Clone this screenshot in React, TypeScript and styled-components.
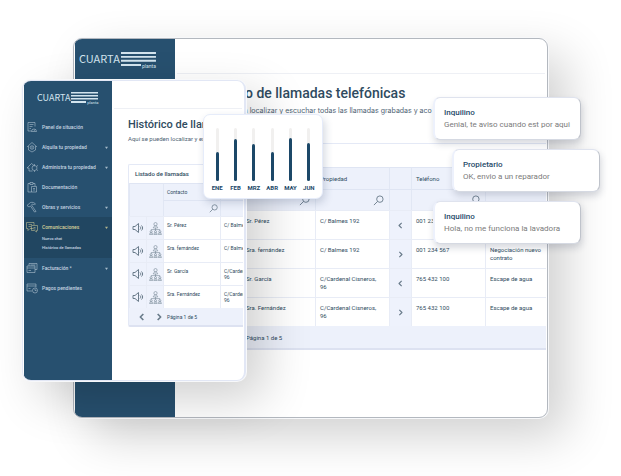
import React from 'react';
import styled, { createGlobalStyle, ThemeProvider } from 'styled-components';

const GlobalStyle = createGlobalStyle`
  *, *::before, *::after { box-sizing: border-box; }
  body { margin: 0; background: #fff; font-family: Roboto, "Open Sans", sans-serif; color: #2f4b60; }
  button { font: inherit; color: inherit; background: none; border: 0; padding: 0; }
  svg { display: block; }
`;

const large = {
  side: 100, bar: 35, logoTop: 13, logoLeft: 4, logoHeight: 40, logoText: 11, lines: 35, planta: 5,
  inset: 21, title: 14, titleTop: 9, subtitle: 7, titleGap: 6, boxTop: 28, caption: 24, captionText: 7,
  head: 22, filter: 21, row: 29, foot: 22, text: 6, headText: 6, line: 8, padY: 6, padX: 5,
  icon: 22, person: 74, place: 74, lens: 11, lensRight: 5, spill: 0, bottom: 67,
};

const compact: typeof large = {
  side: 88, bar: 28, logoTop: 11, logoLeft: 13, logoHeight: 24, logoText: 9, lines: 27, planta: 4,
  inset: 16, title: 11, titleTop: 7, subtitle: 6, titleGap: 4, boxTop: 21, caption: 19, captionText: 6,
  head: 17, filter: 16, row: 23, foot: 17, text: 5, headText: 5, line: 6, padY: 5, padX: 4,
  icon: 17, person: 57, place: 57, lens: 9, lensRight: 2, spill: 34, bottom: 53,
};

declare module 'styled-components' {
  export interface DefaultTheme extends Record<string, number> {}
}

const Stage = styled.main`
  position: relative;
  min-height: 476px;
  padding: 38px 73px 58px;
  overflow: hidden;
`;

const Window = styled.section`
  display: flex;
  overflow: hidden;
  border: 1px solid #b3b8bf;
  border-radius: 9px;
  background: #fff;
  box-shadow: inset 0 0 0 1px #fff, 0 0 0 1px #f7f8fa, 18px 18px 48px rgba(0, 0, 0, 0.19);
`;

const FrontWindow = styled(Window)`
  position: absolute;
  top: 80px;
  left: 22px;
  width: 36%;
  min-width: 224px;
  border-color: #e2e7f5;
  border-right-width: 2px;
`;

const Sidebar = styled.aside`
  flex: none;
  width: ${({ theme }) => theme.side}px;
  margin-left: 1px;
  background: #27506f;
  color: #c6d5e1;
`;

const Brand = styled.a`
  display: flex;
  align-items: flex-start;
  gap: 1px;
  height: ${({ theme }) => theme.logoHeight}px;
  padding: ${({ theme }) => theme.logoTop}px 0 0 ${({ theme }) => theme.logoLeft}px;
  color: #d3e4ee;
  text-decoration: none;
`;

const BrandName = styled.span`
  font-family: "Noto Sans CJK SC", sans-serif;
  font-size: ${({ theme }) => theme.logoText}px;
  line-height: ${({ theme }) => theme.logoText + 2}px;
`;

const BrandMark = styled.span`
  display: block;
  width: ${({ theme }) => theme.lines}px;
`;

const BrandFoot = styled.span`
  display: grid;
  grid-template-columns: 1fr auto;
  align-items: start;
  gap: 1px;
  font-size: ${({ theme }) => theme.planta}px;
  line-height: 4px;

  &::before {
    content: "";
    height: 2px;
    background: currentColor;
  }
`;

const Nav = styled.nav`
  padding-top: 12px;
  font-size: 5px;
  font-weight: 500;
`;

const NavGroup = styled.div<{ $active?: boolean }>`
  padding: ${({ $active }) => ($active ? '3px 0 6px' : '0')};
  background: ${({ $active }) => ($active ? '#214661' : 'transparent')};
`;

const NavItem = styled.button<{ $active?: boolean }>`
  display: grid;
  grid-template-columns: 13px 1fr 4px;
  align-items: center;
  gap: 3px;
  width: 100%;
  height: ${({ $active }) => ($active ? 14 : 20)}px;
  padding: 0 3px 0 2px;
  text-align: left;
  color: ${({ $active }) => ($active ? '#d8d19a' : 'inherit')};
`;

const SubItem = styled.a`
  display: block;
  padding-left: 18px;
  font-size: 4px;
  line-height: 9px;
  color: inherit;
  text-decoration: none;
`;

const Content = styled.div`
  flex: 1;
  min-width: 0;
  padding-bottom: ${({ theme }) => theme.bottom}px;
  overflow: hidden;
`;

const TopBar = styled.header`
  height: ${({ theme }) => theme.bar}px;
  margin: 0 2px;
  border-bottom: 1px solid #eef0f5;
`;

const Heading = styled.h1`
  margin: 0;
  padding: ${({ theme }) => theme.titleTop}px 0 0 ${({ theme }) => theme.inset}px;
  font-size: ${({ theme }) => theme.title}px;
  line-height: ${({ theme }) => theme.title + 6}px;
  font-weight: 500;
  white-space: nowrap;
`;

const Intro = styled.p<{ $wide?: boolean }>`
  margin: 0;
  padding: ${({ theme }) => theme.titleGap - 3}px 0 0 ${({ theme }) => theme.inset}px;
  font-family: ${({ $wide }) => ($wide ? 'Inter, sans-serif' : 'inherit')};
  font-size: ${({ theme }) => theme.subtitle}px;
  line-height: 9px;
  white-space: nowrap;
  color: #4d6273;
`;

const Listing = styled.div`
  margin: ${({ theme }) => theme.boxTop}px 1px 0 ${({ theme }) => theme.inset}px;
  overflow: hidden;
  border: 1px solid #e4e9f6;
  border-width: 1px 0 2px 1px;
  border-bottom-color: #dde2f1;
  border-radius: 2px 0 0 2px;
`;

const Table = styled.table`
  width: calc(100% + ${({ theme }) => theme.spill}px);
  table-layout: fixed;
  border-collapse: separate;
  border-spacing: 0;
  font-size: ${({ theme }) => theme.text}px;
  line-height: ${({ theme }) => theme.line}px;

  caption {
    height: ${({ theme }) => theme.caption - 1}px;
    padding-left: 6px;
    font-size: ${({ theme }) => theme.captionText}px;
    line-height: ${({ theme }) => theme.caption - 1}px;
    font-weight: 500;
    text-align: left;
  }
`;

const Col = styled.col<{ $kind?: 'icon' | 'person' | 'place' }>`
  width: ${({ theme, $kind }) => ($kind ? `${theme[$kind]}px` : 'auto')};
`;

const HeadCell = styled.th<{ $filter?: boolean }>`
  height: ${({ theme, $filter }) => ($filter ? theme.filter : theme.head)}px;
  padding: 0 ${({ theme, $filter }) => ($filter ? theme.lensRight : 0)}px 0 ${({ theme }) => theme.padX - 1}px;
  border-top: 1px solid #dfe5f3;
  border-left: 1px solid #e1e7f4;
  background: #edf1fb;
  font-size: ${({ theme }) => theme.headText}px;
  font-weight: 400;
  text-align: left;
`;

const Cell = styled.td`
  height: ${({ theme }) => theme.row}px;
  padding: ${({ theme }) => theme.padY}px 0 0 ${({ theme }) => theme.padX - 1}px;
  border-top: 1px solid #e8ecf6;
  border-left: 1px solid #e8ecf6;
  vertical-align: top;
  white-space: pre-line;
`;

const IconCell = styled(Cell)`
  padding: 0;
  background: #eef2fc;
  vertical-align: middle;
`;

const IconButton = styled.button`
  display: flex;
  margin: 0 auto;
  color: #6a7c8b;
`;

const Search = styled(IconButton)`
  margin: 0 0 0 auto;
`;

const Pager = styled.footer`
  display: grid;
  grid-template-columns: ${({ theme }) => `${theme.icon}px ${theme.icon}px 1fr`};
  align-items: center;
  height: ${({ theme }) => theme.foot}px;
  padding-left: ${({ theme }) => theme.padX}px;
  background: #edf1fb;
  font-size: ${({ theme }) => theme.headText}px;
`;

const ChartCard = styled.figure`
  position: absolute;
  top: 114px;
  left: 203px;
  display: grid;
  grid-template-columns: repeat(6, 1fr);
  width: 120px;
  margin: 0;
  padding: 13px 4px 6px;
  border: 1px solid #e6ecfa;
  border-radius: 7px;
  background: #fff;
  box-shadow: 2px 4px 8px rgba(40, 60, 100, 0.2);
`;

const Month = styled.div`
  display: flex;
  flex-direction: column;
  align-items: center;
  gap: 3px;
  font-size: 6px;
  line-height: 8px;
  font-weight: 700;
  color: #1c4868;
`;

const Track = styled.div`
  display: flex;
  align-items: flex-end;
  width: 3px;
  height: 53px;
  border-radius: 2px;
  background: #f1f0ef;
`;

const Fill = styled.div`
  width: 100%;
  border-radius: 2px;
  background: #1c4868;
`;

const Messages = styled.ul`
  position: absolute;
  top: 97px;
  right: 21px;
  display: flex;
  flex-direction: column;
  gap: 9px;
  width: 167px;
  margin: 0;
  padding: 0;
  list-style: none;
`;

const Message = styled.li<{ $own?: boolean }>`
  width: 148px;
  height: 43px;
  align-self: ${({ $own }) => ($own ? 'flex-end' : 'flex-start')};
  padding: 9px 0 0 9px;
  border: 1px solid #bfc3cb;
  border-top-color: #dfe3ee;
  border-left: 2px solid #edf1fc;
  border-bottom-color: #d5d9e2;
  border-radius: 7px;
  background: #fff;
  box-shadow: 1px 4px 7px rgba(40, 50, 80, 0.18);
  font-size: 8px;
  line-height: 12px;
  white-space: nowrap;
  color: #7b7b7b;
`;

const Sender = styled.strong`
  display: block;
  font-weight: 500;
  color: #1f4a69;
`;

const iconPaths: Record<string, React.ReactNode> = {
  panel: <><path d="M18 11V3H4v17h7M7 7h8M7 11h6M7 15h3" /><path d="M11 21a5 5 0 0 1 10 0zM16 20l2-3" /></>,
  rent: <><path d="m2 12 10-9 10 9M5 10v8l7 4 7-4v-8" /><circle cx="12" cy="13" r="3.5" /><path d="M12 11v4" /></>,
  manage: <><path d="M9 20H6v-6H2l9-9 6 5M9 20h4" /><circle cx="17" cy="14" r="5" /><path d="M17 6v3M17 19v3M22 10l2-1M22 18l2 1" /></>,
  docs: <><path d="M8 5H4v17h7M14 5h4v5M8 3h6v4H8z" /><path d="M11 11h10v11H11zM14 15h4M14 18h4" /></>,
  works: <path d="m2 9 7-6c4-1 7 0 10 3l-4 1-2-1-2 2 9 13-3 1-8-12-3 2z" />,
  chat: <><path d="M15 15H8l-4 4v-4H1V3h15v5M5 7h7M5 11h5" /><path d="M11 9h12v10h-2v3l-4-3h-6zM15 13h4M15 16h4" /></>,
  bill: <><path d="M6 8V3h16v12h-4M9 6h10" /><path d="M2 8h16v13H2zM2 12h16M5 17h5" /></>,
  pay: <><path d="M12 18H2V4h18v7M2 8h18M5 13h4" /><circle cx="18" cy="17" r="5" /><path d="M18 14v3h3" /></>,
  sound: <path d="M2 9h4l7-6v18l-7-6H2zM16 9c2 2 2 4 0 6M19 7c3 3 3 7 0 10" />,
  tree: <><circle cx="12" cy="4" r="3" /><path d="M8 11c0-5 8-5 8 0zM12 11v3M4 16v-2h16v2M12 14v2" /><circle cx="4" cy="18" r="2" /><circle cx="12" cy="18" r="2" /><circle cx="20" cy="18" r="2" /><path d="M1 23c0-4 6-4 6 0zM9 23c0-4 6-4 6 0zM17 23c0-4 6-4 6 0z" /></>,
  search: <><circle cx="15" cy="9" r="7" /><path d="m10 14-8 8" /></>,
  left: <path d="m16 3-9 9 9 9" />,
  right: <path d="m8 3 9 9-9 9" />,
};

function Icon({ name, size, weight = 2 }: { name: string; size: number; weight?: number }) {
  return (
    <svg width={size} height={size} viewBox="0 0 24 24" fill="none" stroke="currentColor" strokeWidth={weight} strokeLinejoin="round" aria-hidden="true">
      {iconPaths[name]}
    </svg>
  );
}

function Caret() {
  return <svg width="3" height="3" viewBox="0 0 4 4" aria-hidden="true"><path d="M0 1h4L2 4z" fill="currentColor" opacity="0.8" /></svg>;
}

function Logo() {
  return (
    <Brand href="#inicio">
      <BrandName>CUARTA</BrandName>
      <BrandMark>
        <svg viewBox="0 0 36 12" fill="currentColor" aria-hidden="true">
          <path d="M0 0h36v2H0zM0 4h36v2H0zM0 8h36v2H0z" />
        </svg>
        <BrandFoot>planta</BrandFoot>
      </BrandMark>
    </Brand>
  );
}

function PageIntro({ wide }: { wide?: boolean }) {
  return (
    <>
      <TopBar />
      <Heading>Histórico de llamadas telefónicas</Heading>
      <Intro $wide={wide}>Aquí se pueden localizar y escuchar todas las llamadas grabadas y aco</Intro>
    </>
  );
}

const calls = [
  { who: 'Sr. Pérez', where: 'C/ Balmes 192', way: 'left', phone: '001 234 567', about: '' },
  { who: 'Sra. fernández', where: 'C/ Balmes 192', way: 'right', phone: '001 234 567', about: 'Negociación nuevo\ncontrato' },
  { who: 'Sr. García', where: 'C/Cardenal Cisneros,\n96', way: 'left', phone: '765 432 100', about: 'Escape de agua' },
  { who: 'Sra. Fernández', where: 'C/Cardenal Cisneros,\n96', way: 'right', phone: '765 432 100', about: 'Escape de agua' },
];

function Calls({ full }: { full?: boolean }) {
  const m = full ? large : compact;
  const lens = <Search aria-label="Buscar"><Icon name="search" size={m.lens} /></Search>;
  return (
    <Listing>
      <Table>
        <caption>Listado de llamadas</caption>
        <colgroup>
          <Col $kind="icon" /><Col $kind="icon" /><Col $kind="person" />
          {full ? <><Col $kind="place" /><Col $kind="icon" /><Col $kind="place" /><Col /></> : <Col />}
        </colgroup>
        <thead>
          <tr>
            <HeadCell colSpan={2} rowSpan={2} />
            <HeadCell>Contacto</HeadCell>
            {full ? <><HeadCell>Propiedad</HeadCell><HeadCell /><HeadCell>Teléfono</HeadCell><HeadCell /></> : <HeadCell />}
          </tr>
          <tr>
            <HeadCell $filter>{lens}</HeadCell>
            {full ? <><HeadCell $filter>{lens}</HeadCell><HeadCell $filter /><HeadCell $filter>{lens}</HeadCell><HeadCell $filter /></> : <HeadCell $filter />}
          </tr>
        </thead>
        <tbody>
          {calls.map((call) => (
            <tr key={call.who}>
              <IconCell><IconButton aria-label="Escuchar"><Icon name="sound" size={12} /></IconButton></IconCell>
              <IconCell><IconButton aria-label="Derivar"><Icon name="tree" size={13} weight={1} /></IconButton></IconCell>
              <Cell>{call.who}</Cell>
              <Cell>{call.where}</Cell>
              {full && (
                <>
                  <IconCell><IconButton aria-label="Sentido"><Icon name={call.way} size={7} weight={4} /></IconButton></IconCell>
                  <Cell>{call.phone}</Cell>
                  <Cell>{call.about}</Cell>
                </>
              )}
            </tr>
          ))}
        </tbody>
      </Table>
      <Pager>
        <IconButton aria-label="Anterior"><Icon name="left" size={8} weight={5} /></IconButton>
        <IconButton aria-label="Siguiente"><Icon name="right" size={8} weight={5} /></IconButton>
        <span>Página 1 de 5</span>
      </Pager>
    </Listing>
  );
}

const sections = [
  { icon: 'panel', label: 'Panel de situación' },
  { icon: 'rent', label: 'Alquila tu propiedad', more: true },
  { icon: 'manage', label: 'Administra tu propiedad', more: true },
  { icon: 'docs', label: 'Documentación' },
  { icon: 'works', label: 'Obras y servicios', more: true },
  { icon: 'chat', label: 'Comunicaciones', more: true, children: ['Nuevo chat', 'Histórico de llamadas'] },
  { icon: 'bill', label: 'Facturación *', more: true },
  { icon: 'pay', label: 'Pagos pendientes' },
];

const months: [string, number][] = [['ENE', 29], ['FEB', 42], ['MRZ', 37], ['ABR', 29], ['MAY', 43], ['JUN', 38]];

const messages = [
  { from: 'Inquilino', text: 'Genial, te aviso cuando est por aqui' },
  { from: 'Propietario', text: 'OK, envio a un reparador', own: true },
  { from: 'Inquilino', text: 'Hola, no me funciona la lavadora' },
];

export default function App() {
  return (
    <Stage>
      <GlobalStyle />
      <ThemeProvider theme={large}>
        <Window>
          <Sidebar><Logo /></Sidebar>
          <Content><PageIntro wide /><Calls full /></Content>
        </Window>
      </ThemeProvider>
      <ThemeProvider theme={compact}>
        <FrontWindow>
          <Sidebar>
            <Logo />
            <Nav>
              {sections.map((s) => (
                <NavGroup key={s.label} $active={!!s.children}>
                  <NavItem $active={!!s.children}>
                    <Icon name={s.icon} size={12} weight={1} />
                    {s.label}
                    {s.more && <Caret />}
                  </NavItem>
                  {s.children?.map((c) => <SubItem key={c} href="#comunicaciones">{c}</SubItem>)}
                </NavGroup>
              ))}
            </Nav>
          </Sidebar>
          <Content><PageIntro /><Calls /></Content>
        </FrontWindow>
      </ThemeProvider>
      <ChartCard aria-label="Llamadas por mes">
        {months.map(([name, value]) => (
          <Month key={name}>
            <Track><Fill style={{ height: value }} /></Track>
            {name}
          </Month>
        ))}
      </ChartCard>
      <Messages>
        {messages.map((msg) => (
          <Message key={msg.text} $own={msg.own}>
            <Sender>{msg.from}</Sender>
            {msg.text}
          </Message>
        ))}
      </Messages>
    </Stage>
  );
}
